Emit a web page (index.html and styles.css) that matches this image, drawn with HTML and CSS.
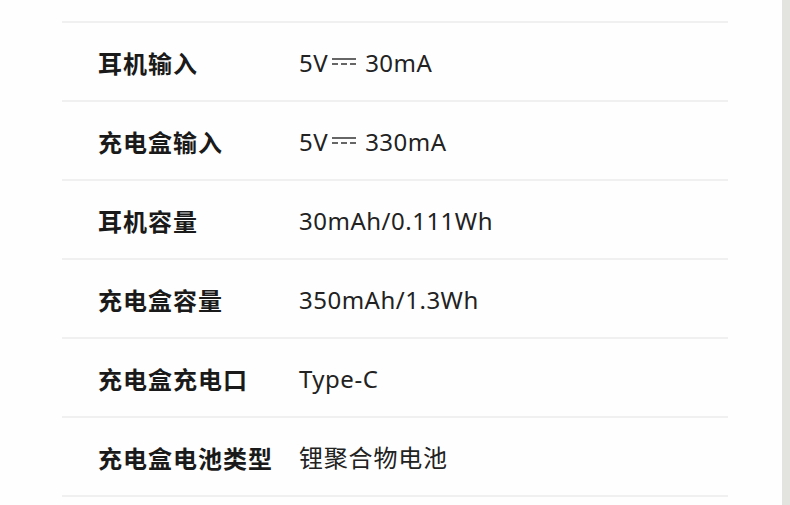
FILE: index.html
```html
<!DOCTYPE html>
<html lang="zh-CN">
<head>
<meta charset="utf-8">
<title>规格参数</title>
<link rel="stylesheet" href="styles.css">
</head>
<body>
<div class="page">
  <main class="content">
    <div class="spec-table">
      <div class="row"><div class="label">耳机输入</div><div class="value">5V<svg class="dc" viewBox="0 0 24 10" width="24" height="10"><rect x="0" y="0" width="24" height="2"/><rect x="0" y="5" width="6" height="2"/><rect x="9" y="5" width="6" height="2"/><rect x="18" y="5" width="6" height="2"/></svg>30mA</div></div>
      <div class="row"><div class="label">充电盒输入</div><div class="value">5V<svg class="dc" viewBox="0 0 24 10" width="24" height="10"><rect x="0" y="0" width="24" height="2"/><rect x="0" y="5" width="6" height="2"/><rect x="9" y="5" width="6" height="2"/><rect x="18" y="5" width="6" height="2"/></svg>330mA</div></div>
      <div class="row"><div class="label">耳机容量</div><div class="value">30mAh/0.111Wh</div></div>
      <div class="row"><div class="label">充电盒容量</div><div class="value">350mAh/1.3Wh</div></div>
      <div class="row"><div class="label">充电盒充电口</div><div class="value">Type-C</div></div>
      <div class="row"><div class="label">充电盒电池类型</div><div class="value cjk">锂聚合物电池</div></div>
    </div>
  </main>
  <div class="scrollbar"></div>
</div>
</body>
</html>
```

FILE: styles.css
```css
html, body {
  margin: 0;
  padding: 0;
  background: #ffffff;
}
.page {
  display: flex;
  width: 790px;
  height: 505px;
  overflow: hidden;
}
.content {
  flex: 1;
  padding: 21px 54px 0 62px;
  background: #fefefe;
}
.scrollbar {
  width: 8px;
  height: 505px;
  background: #e3e3df;
}
.spec-table {
  width: 666px;
  border-top: 2px solid #f0f0f0;
}
.row {
  display: flex;
  align-items: center;
  height: 77px;
  border-bottom: 2px solid #f0f0f0;
  padding-left: 36px;
}
.label {
  width: 201px;
  font-family: "Noto Sans CJK SC", sans-serif;
  font-weight: 700;
  font-size: 24px;
  letter-spacing: 1px;
  color: #1a1a1a;
  line-height: 1;
  padding-top: 2px;
}
.value {
  display: flex;
  align-items: center;
  font-family: "Noto Sans", "Noto Sans CJK SC", sans-serif;
  font-size: 24px;
  letter-spacing: 0.5px;
  color: #222222;
  line-height: 1;
  padding-top: 2px;
}
.value.cjk {
  letter-spacing: 0.8px;
}
.dc {
  fill: #666666;
  margin: 0 9px 0 4px;
}
```
